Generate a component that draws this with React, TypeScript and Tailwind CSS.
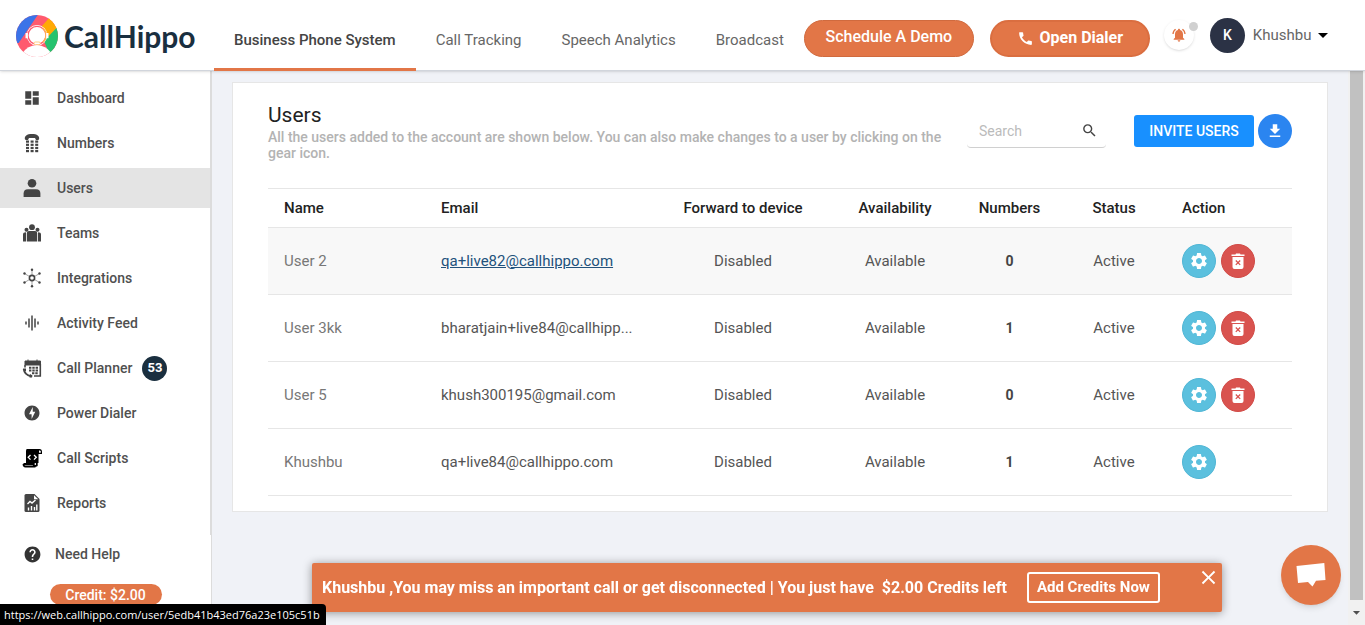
import React from "react";
import {
  MdArrowDropDown,
  MdCall,
  MdClose,
  MdDashboard,
  MdFileDownload,
  MdGraphicEq,
  MdHelp,
  MdNotificationsActive,
  MdOfflineBolt,
  MdSearch,
  MdSettings,
} from "react-icons/md";

const tabs = [
  "Business Phone System",
  "Call Tracking",
  "Speech Analytics",
  "Broadcast",
];

const users = [
  { name: "User 2", email: "qa+live82@callhippo.com", numbers: 0, owner: false },
  {
    name: "User 3kk",
    email: "bharatjain+live84@callhipp...",
    numbers: 1,
    owner: false,
  },
  { name: "User 5", email: "khush300195@gmail.com", numbers: 0, owner: false },
  { name: "Khushbu", email: "qa+live84@callhippo.com", numbers: 1, owner: true },
];

const Logo = () => (
  <svg viewBox="0 0 126 126" className="h-[42px] w-[42px]" aria-hidden="true">
    <clipPath id="logoCircle">
      <circle cx="63" cy="63" r="63" />
    </clipPath>
    <g clipPath="url(#logoCircle)">
      <rect width="126" height="126" fill="#ff5a6e" />
      <path d="M68 -4L8 84L-10 84V-10Z" fill="#3b73e8" />
      <path d="M102 6L70 42L92 72L124 38Z" fill="#ffaa05" />
      <path d="M122 38L84 78L100 116L130 110V38Z" fill="#25c26e" />
      <path d="M20 114Q34 92 63 90Q90 92 104 112L100 130H24Z" fill="#fff" />
      <circle cx="63" cy="61" r="31" fill="#fff" />
      <circle cx="63" cy="61" r="27" fill="none" stroke="#ff5a6e" strokeWidth="4" />
      <path d="M80 40A27 27 0 0 1 80 82" fill="none" stroke="#ffb84d" strokeWidth="4" />
      <path d="M32 54v16M94 54v16" stroke="#fff" strokeWidth="7" />
      <rect x="54" y="81" width="19" height="8" rx="4" fill="#fff" stroke="#ffb84d" strokeWidth="2" />
    </g>
  </svg>
);

const NumbersIcon = () => (
  <svg viewBox="0 0 18 20" className="h-5 w-[18px]" fill="currentColor">
    <path d="M2 6.5C1 3 4 1 9 1s8 2 7 5.500l-1 .5h-2l-1-2H6L5 7H3z" />
    {[3, 7.6, 12.2].map((x) =>
      [7.5, 10.7, 13.9, 17].map((y) => (
        <rect key={`${x}-${y}`} x={x} y={y} width="3" height="2.200" />
      ))
    )}
  </svg>
);

const UsersIcon = () => (
  <svg viewBox="0 0 18 18" className="h-[18px] w-[18px]" fill="currentColor">
    <circle cx="9" cy="4.300" r="4.300" />
    <path d="M.6 18v-3.500Q.6 10.200 5 10.200h8q4.400 0 4.400 4.300V18z" />
  </svg>
);

const TeamsIcon = () => (
  <svg viewBox="0 0 20 20" className="h-5 w-5" fill="currentColor">
    <circle cx="10" cy="4.200" r="2.900" />
    <circle cx="4.500" cy="6.800" r="2" />
    <circle cx="15.500" cy="6.800" r="2" />
    <path d="M4.800 18.500V10Q4.800 8 7 8h6q2.200 0 2.200 2v8.500zM1 18.500v-7Q1 9.300 4 9.300v9.200zM16 18.500V9.300q3 0 3 2.200v7z" />
  </svg>
);

const IntegrationsIcon = () => (
  <svg viewBox="0 0 20 20" className="h-5 w-5" fill="none" stroke="currentColor">
    <circle cx="10" cy="10" r="2.600" strokeWidth="1.600" />
    <path
      d="M10 7V2M10 13v5M7.500 8.500L3 5.800M12.500 8.500L17 5.800M7.500 11.500L3 14.200M12.500 11.500l4.500 2.700"
      strokeWidth="0.500"
    />
    <g fill="currentColor" stroke="none">
      <circle cx="10" cy="1.700" r="1.200" />
      <circle cx="10" cy="18.300" r="1.200" />
      <circle cx="2.500" cy="5.500" r="1.200" />
      <circle cx="17.500" cy="5.500" r="1.200" />
      <circle cx="2.500" cy="14.500" r="1.200" />
      <circle cx="17.500" cy="14.500" r="1.200" />
    </g>
  </svg>
);

const PlannerIcon = () => (
  <svg viewBox="0 0 20 20" className="h-5 w-5" fill="none" stroke="currentColor">
    <path d="M3 3h15.500v4H3zM6 1.500v2M15 1.500v2" fill="currentColor" />
    <path d="M18.300 6v12H12M3 7v2.500" strokeWidth="1.600" />
    <path d="M7 9.700h9.500M7 12.500h9.500M10 15.300h6.500" strokeWidth="2" strokeDasharray="2.400 0.900" />
    <path d="M1.800 11Q2.500 17 9 18.300" strokeWidth="2" />
    <path d="M1 10.500h3v2.500H2zM8 16l2.500 1.500L10 19.500H7.500z" fill="currentColor" stroke="none" />
  </svg>
);

const ScriptIcon = () => (
  <svg viewBox="0 0 20 20" className="h-5 w-5" fill="#000">
    <path d="M5 1h12.500Q20 1 20 4v2h-3.500v9H4V3q0-2 1-2z" />
    <path d="M17 2.500v2.300h1.800V3.500q-.5-1.500-1.800-1z" fill="#fff" />
    <path d="M1.500 16h10.300v1.500q1 1 3 0V14M1.500 16q0 2.500 2 2.500h10" fill="none" stroke="#000" strokeWidth="1.800" />
    <path d="M8.500 7L6.200 9.300l2.300 2.300M12 7l2.300 2.300-2.300 2.300" fill="none" stroke="#fff" strokeWidth="1.300" />
  </svg>
);

const ReportsIcon = () => (
  <svg viewBox="0 0 20 20" className="h-5 w-5" fill="currentColor">
    <path d="M4 1h8.500L17.500 6v11.500q0 1.500-1.500 1.500H4q-1.500 0-1.500-1.500v-15Q2.500 1 4 1z" />
    <path d="M12 2.200v4h4.300z" fill="#fff" />
    <path d="M5.500 11L8 8.500l2 1.500 3.500-3M6.500 17.500v-3M9.500 17.500v-4.500M12.500 17.500V14M14.800 17.500v-6" fill="none" stroke="#fff" strokeWidth="1.400" />
  </svg>
);

const TrashIcon = () => (
  <svg viewBox="0 0 14 16" className="h-4 w-3.5">
    <path d="M.5 1.500h4L5 .5h4l.5 1h4V3H.5zM1.500 4h11v10q0 2-2 2h-7q-2 0-2-2z" fill="#fff" />
    <path d="M4.800 7.500l4.400 4.400M9.200 7.500l-4.400 4.400" stroke="#d9534f" strokeWidth="1.300" />
  </svg>
);

const menu = [
  { label: "Dashboard", icon: <MdDashboard size={18} /> },
  { label: "Numbers", icon: <NumbersIcon /> },
  { label: "Users", icon: <UsersIcon /> },
  { label: "Teams", icon: <TeamsIcon /> },
  { label: "Integrations", icon: <IntegrationsIcon /> },
  { label: "Activity Feed", icon: <MdGraphicEq size={18} /> },
  { label: "Call Planner", icon: <PlannerIcon />, badge: 53 },
  { label: "Power Dialer", icon: <MdOfflineBolt size={18} /> },
  { label: "Call Scripts", icon: <ScriptIcon /> },
  { label: "Reports", icon: <ReportsIcon /> },
];

const Header = () => (
  <header className="relative z-10 flex h-[71px] shrink-0 items-stretch border-b border-gray-300 bg-white shadow-sm">
    <a href="#" className="flex w-[214px] shrink-0 items-center gap-1.5 pt-0.5 pl-4 text-[#1a2f3f]">
      <Logo />
      <span className="font-[Lato,sans-serif] text-[30px] font-bold">
        CallHippo
      </span>
    </a>
    <nav className="-mb-px flex">
      {tabs.map((tab, index) => (
        <a
          key={tab}
          href="#"
          className={`flex items-center whitespace-nowrap border-b-3 px-5 pt-3 text-[15px] ${
            index === 0
              ? "border-[#e27647] font-medium text-[#444]"
              : "border-transparent text-[#666]"
          }`}
        >
          {tab}
        </a>
      ))}
    </nav>
    <div className="ml-auto flex items-center pr-8">
      <button className="mt-1.5 h-[37px] w-[170px] rounded-full border border-[#d06a3e] bg-[#e27647] pb-0.5 text-base font-medium text-white">
        Schedule A Demo
      </button>
      <button className="mt-1.5 ml-4 flex h-[37px] w-40 items-center justify-center gap-1.5 rounded-full border-2 border-[#da6e40] bg-[#e27647] text-base font-bold text-white">
        <MdCall size={17} />
        Open Dialer
      </button>
      <button
        aria-label="Notifications"
        className="relative ml-3.5 flex h-[30px] w-[30px] items-center justify-center rounded-full bg-white text-[#e27647] shadow"
      >
        <MdNotificationsActive size={16} />
        <span className="absolute top-0.5 -right-1 h-[9px] w-[9px] rounded-full bg-[#d0d0d0]" />
      </button>
      <button className="mr-4 ml-4 flex items-center text-[15px] text-[#666]">
        <span className="mr-2 flex h-[35px] w-[35px] items-center justify-center rounded-full bg-[#2b3245] text-sm font-medium text-white">
          K
        </span>
        Khushbu
        <MdArrowDropDown size={24} className="text-black" />
      </button>
    </div>
  </header>
);

const Sidebar = () => (
  <aside className="flex w-[212px] shrink-0 flex-col border-r border-[#dcdcdc] bg-white text-sm font-medium text-[#505050]">
    <nav className="flex flex-col gap-[5px] border-r border-[#dcdcdc] pt-[7px] pb-3">
      {menu.map((item) => (
        <a
          key={item.label}
          href="#"
          className={`flex h-10 items-center ${
            item.label === "Users" ? "bg-[#e4e4e4]" : ""
          }`}
        >
          <span className="ml-[19px] flex w-[26px] justify-center text-[#444]">
            {item.icon}
          </span>
          <span className="ml-3">{item.label}</span>
          {item.badge && (
            <span className="ml-2.5 flex h-[25px] w-[25px] items-center justify-center rounded-full bg-[#1a2f3f] text-[13px] font-bold text-white">
              {item.badge}
            </span>
          )}
        </a>
      ))}
    </nav>
    <a href="#" className="flex h-[38px] items-center">
      <MdHelp size={19} className="ml-[23px] text-[#333]" />
      <span className="ml-[13px]">Need Help</span>
    </a>
    <button className="mt-[11px] h-[21px] w-28 self-center rounded-full bg-[#e27647] text-sm text-white">
      Credit: $2.00
    </button>
  </aside>
);

const UsersTable = () => (
  <table className="mt-[27px] w-full table-fixed text-center text-[15px] text-[#555]">
    <colgroup>
      <col className="w-[157px]" />
      <col />
      <col className="w-[172px]" />
      <col className="w-[132px]" />
      <col className="w-[97px]" />
      <col className="w-[112px]" />
      <col className="w-[122px]" />
    </colgroup>
    <thead>
      <tr className="h-[39px] border-y border-[#e6e6e6] text-[#222]">
        <th className="px-4 text-left font-medium">Name</th>
        <th className="px-4 text-left font-medium">Email</th>
        <th className="font-medium">Forward to device</th>
        <th className="font-medium">Availability</th>
        <th className="font-medium">Numbers</th>
        <th className="font-medium">Status</th>
        <th className="px-3 text-left font-medium">Action</th>
      </tr>
    </thead>
    <tbody>
      {users.map((user, index) => (
        <tr
          key={user.name}
          className={`h-[67px] border-b border-[#e6e6e6] ${
            index === 0 ? "bg-[#f8f8f8]" : ""
          }`}
        >
          <td className="px-4 text-left text-[#777]">{user.name}</td>
          <td className="px-4 text-left">
            <a
              href="#"
              className={index === 0 ? "text-[#23527c] underline" : ""}
            >
              {user.email}
            </a>
          </td>
          <td>Disabled</td>
          <td>Available</td>
          <td className="text-sm font-bold text-[#444]">{user.numbers}</td>
          <td>Active</td>
          <td className="px-3">
            <div className="flex gap-[5px]">
              <button
                aria-label="Settings"
                className="flex h-[34px] w-[34px] items-center justify-center rounded-full border border-[#50b6d5] bg-[#5bc0de] text-white"
              >
                <MdSettings size={20} />
              </button>
              {!user.owner && (
                <button
                  aria-label="Delete"
                  className="flex h-[34px] w-[34px] items-center justify-center rounded-full border border-[#d14b47] bg-[#d9534f]"
                >
                  <TrashIcon />
                </button>
              )}
            </div>
          </td>
        </tr>
      ))}
    </tbody>
  </table>
);

const App: React.FC = () => {
  return (
    <div className="flex h-screen flex-col overflow-hidden bg-[#f0f2f7] font-[Roboto,sans-serif]">
      <Header />
      <div className="flex min-h-0 flex-1">
        <Sidebar />
        <main className="min-w-0 flex-1 px-5 pt-[11px]">
          <section className="border border-[#e6e6e6] bg-white px-[35px] pt-[18px] pb-[15px]">
            <div className="flex items-start">
              <div className="w-[680px]">
                <h1 className="text-[21px] leading-7 text-[#222]">Users</h1>
                <p className="text-sm leading-4 font-medium text-[#b3b3b3]">
                  All the users added to the account are shown below. You can
                  also make changes to a user by clicking on the
                  <br />
                  gear icon.
                </p>
              </div>
              <div className="ml-auto flex items-center pt-[13px]">
                <label className="mr-7 flex h-[34px] w-[139px] items-center rounded border-b border-[#d0d0d0] px-2">
                  <input
                    type="text"
                    aria-label="Search"
                    placeholder="Search"
                    className="w-full min-w-0 pl-1 text-sm outline-none placeholder:text-[#bbb]"
                  />
                  <MdSearch size={17} className="shrink-0 text-[#444]" />
                </label>
                <button className="h-8 w-[120px] rounded-[3px] bg-[#1890ff] text-sm font-medium text-white">
                  INVITE USERS
                </button>
                <button
                  aria-label="Download"
                  className="ml-1 flex h-[34px] w-[34px] items-center justify-center rounded-full bg-[#2b85f0] text-white"
                >
                  <MdFileDownload size={18} />
                </button>
              </div>
            </div>
            <UsersTable />
          </section>
        </main>
        {/* scroll track */}
        <div className="flex w-[17px] shrink-0 flex-col items-center bg-[#f1f1f1]">
          <div className="w-[13px] flex-1 bg-[#c1c1c1]" />
          <MdArrowDropDown size={17} className="my-1 text-[#505050]" />
        </div>
      </div>

      <div className="fixed right-[143px] bottom-[13px] left-[312px] flex h-[49px] items-center rounded-xs bg-[#e27647] pl-2.5 text-base font-bold text-white shadow-[0_1px_10px_rgba(0,0,0,0.4)]">
        <span className="whitespace-pre">
          Khushbu ,You may miss an important call or get disconnected | You
          just have{"  "}$2.00 Credits left
        </span>
        <button className="ml-5 h-[31px] w-[133px] rounded-[3px] border-2 border-white text-[15px]">
          Add Credits Now
        </button>
        <button aria-label="Close" className="mr-0.5 mb-5 ml-auto">
          <MdClose size={23} />
        </button>
      </div>

      <button
        aria-label="Open chat"
        className="fixed right-6 bottom-5 flex h-[60px] w-[60px] items-center justify-center rounded-full bg-[#e27647] shadow-md"
      >
        <svg viewBox="0 0 30 26" className="h-[26px] w-[30px]" fill="#fff">
          <path d="M.5 4L28.300 1L29.500 18L20 18.800L16.500 24.500L12 20L2 21Z" />
        </svg>
      </button>

      <div className="fixed bottom-0 left-0 z-20 h-[21px] rounded-tr bg-black pr-1.5 pl-1 font-['Open_Sans',sans-serif] text-[11px] leading-[21px] text-white">
        https://web.callhippo.com/user/5edb41b43ed76a23e105c51b
      </div>
    </div>
  );
};

export default App;
